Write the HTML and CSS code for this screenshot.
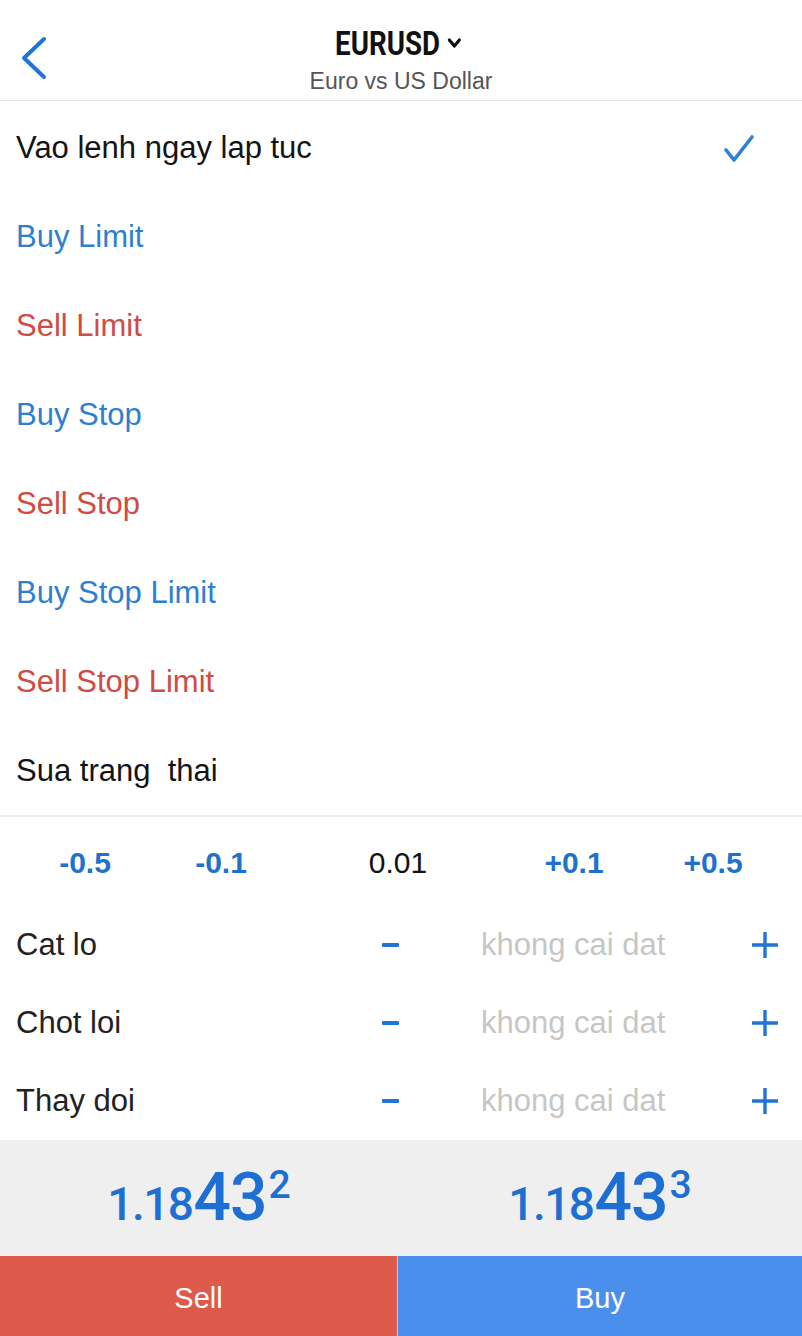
FILE: index.html
```html
<!DOCTYPE html>
<html lang="vi">
<head>
<meta charset="utf-8">
<title>EURUSD</title>
<link rel="stylesheet" href="styles.css">
</head>
<body>
<div class="screen">
  <header class="topbar">
    <div class="back">
      <svg width="28" height="44" viewBox="0 0 28 44"><path d="M25 3 L5 22 L25 41" fill="none" stroke="#1f74d6" stroke-width="4" stroke-linecap="round" stroke-linejoin="round"/></svg>
    </div>
    <div class="title-block">
      <div class="title"><span class="title-inner">EURUSD<svg class="caret" width="18" height="11" viewBox="0 0 18 11"><path d="M3 2 L9 8 L15 2" fill="none" stroke="#111" stroke-width="3.4" stroke-linecap="round" stroke-linejoin="round"/></svg></span></div>
      <div class="subtitle">Euro vs US Dollar</div>
    </div>
    <div></div>
  </header>

  <ul class="types">
    <li class="type dark">Vao lenh ngay lap tuc
      <svg class="check" width="34" height="30" viewBox="0 0 34 30"><path d="M4 16 L12 26 L30 3" fill="none" stroke="#2b7fd6" stroke-width="3.6" stroke-linecap="round" stroke-linejoin="round"/></svg>
    </li>
    <li class="type blue">Buy Limit</li>
    <li class="type red">Sell Limit</li>
    <li class="type blue">Buy Stop</li>
    <li class="type red">Sell Stop</li>
    <li class="type blue">Buy Stop Limit</li>
    <li class="type red">Sell Stop Limit</li>
    <li class="type dark">Sua trang&nbsp; thai</li>
  </ul>

  <div class="stepper">
    <span class="step">-0.5</span>
    <span class="step">-0.1</span>
    <span class="volume">0.01</span>
    <span class="step">+0.1</span>
    <span class="step">+0.5</span>
  </div>

  <div class="field">
    <span class="label">Cat lo</span>
    <span class="minus-cell"><span class="minus"></span></span>
    <span class="placeholder">khong cai dat</span>
    <span class="plus-cell"><svg width="28" height="28" viewBox="0 0 28 28"><path d="M14 1 V27 M1 14 H27" stroke="#1f74d6" stroke-width="3.4"/></svg></span>
  </div>
  <div class="field">
    <span class="label">Chot loi</span>
    <span class="minus-cell"><span class="minus"></span></span>
    <span class="placeholder">khong cai dat</span>
    <span class="plus-cell"><svg width="28" height="28" viewBox="0 0 28 28"><path d="M14 1 V27 M1 14 H27" stroke="#1f74d6" stroke-width="3.4"/></svg></span>
  </div>
  <div class="field">
    <span class="label">Thay doi</span>
    <span class="minus-cell"><span class="minus"></span></span>
    <span class="placeholder">khong cai dat</span>
    <span class="plus-cell"><svg width="28" height="28" viewBox="0 0 28 28"><path d="M14 1 V27 M1 14 H27" stroke="#1f74d6" stroke-width="3.4"/></svg></span>
  </div>

  <div class="prices">
    <div class="price"><span class="p-sm">1.18</span><span class="p-lg">43</span><span class="p-sup">2</span></div>
    <div class="price"><span class="p-sm">1.18</span><span class="p-lg">43</span><span class="p-sup">3</span></div>
  </div>

  <div class="actions">
    <div class="btn sell">Sell</div>
    <div class="btn buy">Buy</div>
  </div>
</div>
</body>
</html>
```

FILE: styles.css
```css
* { box-sizing: border-box; }
html, body { margin: 0; padding: 0; background: #fff; }
body { font-family: "Liberation Sans", Arial, sans-serif; color: #111; }

.screen { width: 802px; height: 1336px; overflow: hidden; display: flex; flex-direction: column; }

/* header */
.topbar {
  height: 101px;
  border-bottom: 1px solid #e4e4e4;
  display: grid;
  grid-template-columns: 70px 1fr 70px;
}
.back { padding: 36px 0 0 19px; }
.back svg { display: block; }
.title-block { display: flex; flex-direction: column; align-items: center; padding-top: 26px; }
.title {
  height: 36px;
  line-height: 36px;
  font-family: Roboto, "Liberation Sans", sans-serif;
  font-weight: 700;
  font-size: 33px;
  color: #111;
}
.title-inner { display: inline-flex; align-items: center; transform: scaleX(0.84); margin-left: -6px; }
.caret { margin-left: 8px; margin-top: -2px; }
.subtitle {
  margin-top: 6px;
  font-size: 23px;
  line-height: 26px;
  color: #555;
}

/* order types */
.types { list-style: none; margin: 0; padding: 2px 0 0 0; }
.type {
  height: 89px;
  display: flex;
  align-items: center;
  justify-content: space-between;
  padding: 0 46px 0 16px;
  font-size: 31px;
}
.type.dark { color: #141414; }
.type.blue { color: #2e7fd0; }
.type.red { color: #cf4b43; }
.check { display: block; margin-top: 2px; }

/* stepper */
.stepper {
  border-top: 2px solid #ececec;
  height: 91px;
  padding: 2px 17px 0;
  display: grid;
  grid-template-columns: 136px 136px 1fr 134px 144px;
  align-items: center;
  justify-items: center;
  font-size: 30px;
}
.step { color: #1f72cc; font-weight: 700; }
.volume { color: #111; }

/* SL / TP fields */
.field {
  height: 78px;
  padding: 0 12px 0 16px;
  display: grid;
  grid-template-columns: 1fr 40px 330px 50px;
  align-items: center;
  font-size: 31px;
}
.label { color: #222; }
.minus-cell, .plus-cell { display: flex; justify-content: center; align-items: center; }
.minus { width: 17px; height: 4px; background: #1f74d6; border-radius: 1px; }
.plus-cell svg { display: block; }
.placeholder { color: #c6c6c6; padding-left: 71px; }

/* prices */
.prices {
  height: 116px;
  background: #efefef;
  display: grid;
  grid-template-columns: 398px 1fr;
  align-items: center;
}
.price {
  justify-self: center;
  font-family: Roboto, "Liberation Sans", sans-serif;
  font-weight: 500;
  color: #1d6fd3;
  line-height: 70px;
  white-space: nowrap;
  padding-top: 4px;
}
.p-sm { font-size: 46px; letter-spacing: -1.5px; }
.p-lg { font-size: 66px; letter-spacing: -1px; margin-left: 1px; }
.p-sup { font-size: 39px; vertical-align: 22px; margin-left: 2px; }

/* actions */
.actions { height: 80px; display: grid; grid-template-columns: 398px 1fr; }
.btn {
  display: flex;
  align-items: center;
  justify-content: center;
  color: #fff;
  font-size: 29px;
  padding-top: 4px;
}
.sell { background: #dd5a4b; border-right: 1px solid #c9c9c9; }
.buy { background: #4b8fec; }
```
